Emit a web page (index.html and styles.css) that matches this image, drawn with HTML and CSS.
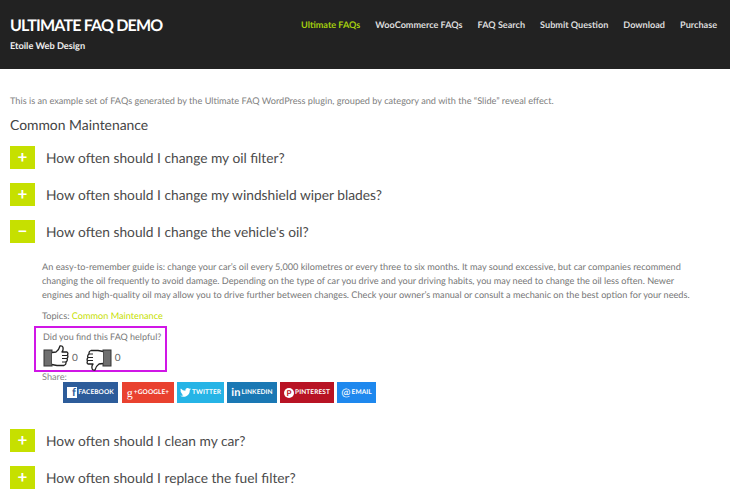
FILE: index.html
```html
<!DOCTYPE html>
<html lang="en">
<head>
<meta charset="utf-8">
<title>Ultimate FAQ Demo</title>
<link rel="stylesheet" href="styles.css">
</head>
<body>
<header class="site-header">
  <div class="brand">
    <h1 class="site-title">ULTIMATE FAQ DEMO</h1>
    <p class="site-sub">Etoile Web Design</p>
  </div>
  <nav class="nav">
    <a class="nav-link current" href="#">Ultimate FAQs</a>
    <a class="nav-link" href="#">WooCommerce FAQs</a>
    <a class="nav-link" href="#">FAQ Search</a>
    <a class="nav-link" href="#">Submit Question</a>
    <a class="nav-link" href="#">Download</a>
    <a class="nav-link" href="#">Purchase</a>
  </nav>
</header>
<main class="content">
  <p class="intro">This is an example set of FAQs generated by the Ultimate FAQ WordPress plugin, grouped by category and with the “Slide” reveal effect.</p>
  <h2 class="category">Common Maintenance</h2>
  <div class="faq"><span class="tile">+</span><h3 class="question">How often should I change my oil filter?</h3></div>
  <div class="faq"><span class="tile">+</span><h3 class="question">How often should I change my windshield wiper blades?</h3></div>
  <div class="faq"><span class="tile">−</span><h3 class="question">How often should I change the vehicle's oil?</h3></div>
  <div class="answer">
    <p class="answer-text">An easy-to-remember guide is: change your car’s oil every 5,000 kilometres or every three to six months. It may sound excessive, but car companies recommend changing the oil frequently to avoid damage. Depending on the type of car you drive and your driving habits, you may need to change the oil less often. Newer engines and high-quality oil may allow you to drive further between changes. Check your owner’s manual or consult a mechanic on the best option for your needs.</p>
    <p class="topics">Topics: <a href="#" class="topic-link">Common Maintenance</a></p>
    <div class="helpful">
      <p class="helpful-q">Did you find this FAQ helpful?</p>
      <div class="votes">
        <svg class="thumb" width="26" height="26" viewBox="0 0 26 26" aria-hidden="true"><rect x="1" y="5" width="8" height="16" fill="#6f6f6f" stroke="#333" stroke-width="1"/><path d="M9 7.500 L13 7 Q16 5 17 1 Q20 .5 20 3 Q20.500 5 19 7 L24 7 Q25.500 8 24.500 10 Q25.500 12 24 13.500 Q25 15.500 23 17 Q23.500 19.500 21 20.500 L14 20.500 Q11 20 9 19.500" fill="#fff" stroke="#222" stroke-width="1.300" stroke-linejoin="round"/><path d="M19 10.500 H24 M19 13.500 H24 M19 17 H23" fill="none" stroke="#222" stroke-width="1"/></svg>
        <span class="count">0</span>
        <svg class="thumb down" width="26" height="26" viewBox="0 0 26 26" aria-hidden="true"><rect x="1" y="5" width="8" height="16" fill="#6f6f6f" stroke="#333" stroke-width="1"/><path d="M9 7.500 L13 7 Q16 5 17 1 Q20 .5 20 3 Q20.500 5 19 7 L24 7 Q25.500 8 24.500 10 Q25.500 12 24 13.500 Q25 15.500 23 17 Q23.500 19.500 21 20.500 L14 20.500 Q11 20 9 19.500" fill="#fff" stroke="#222" stroke-width="1.300" stroke-linejoin="round"/><path d="M19 10.500 H24 M19 13.500 H24 M19 17 H23" fill="none" stroke="#222" stroke-width="1"/></svg>
        <span class="count">0</span>
      </div>
    </div>
    <p class="share-label">Share:</p>
    <div class="share">
      <a href="#" class="btn fb"><span class="glyph fb-g">f</span>FACEBOOK</a>
      <a href="#" class="btn gp"><span class="glyph gp-g">g</span>+GOOGLE+</a>
      <a href="#" class="btn tw"><svg class="ico" width="11" height="9" viewBox="0 0 24 20" aria-hidden="true"><path fill="#fff" d="M24 2.400a9.800 9.800 0 0 1-2.800.8 4.900 4.900 0 0 0 2.200-2.700 9.800 9.800 0 0 1-3.100 1.200A4.900 4.900 0 0 0 11.900 6.100 14 14 0 0 1 1.700.9a4.900 4.900 0 0 0 1.500 6.600 4.900 4.900 0 0 1-2.200-.6c0 2.400 1.700 4.400 3.900 4.900a4.900 4.900 0 0 1-2.200.1 4.900 4.900 0 0 0 4.600 3.400A9.900 9.900 0 0 1 0 17.300 14 14 0 0 0 21.500 5c1-.7 1.900-1.600 2.500-2.600z"/></svg>TWITTER</a>
      <a href="#" class="btn li"><span class="glyph li-g">in</span>LINKEDIN</a>
      <a href="#" class="btn pi"><span class="pin">P</span>PINTEREST</a>
      <a href="#" class="btn em"><span class="glyph em-g">@</span>EMAIL</a>
    </div>
  </div>
  <div class="faq"><span class="tile">+</span><h3 class="question">How often should I clean my car?</h3></div>
  <div class="faq"><span class="tile">+</span><h3 class="question">How often should I replace the fuel filter?</h3></div>
</main>
</body>
</html>
```
FILE: styles.css
```css
* { box-sizing: border-box; }
html, body { margin: 0; padding: 0; }
body {
  width: 730px;
  height: 502px;
  overflow: hidden;
  background: #fff;
  font-family: Lato, "Open Sans", sans-serif;
  color: #777;
  text-rendering: geometricPrecision;
}
p, h1, h2, h3 { margin: 0; }
a { text-decoration: none; }

.site-header {
  height: 69px;
  background: #222;
  display: flex;
  justify-content: space-between;
  padding: 16px 0 0 10px;
}
.site-title { font-size: 16px; line-height: 19px; font-weight: 700; letter-spacing: -.8px; color: #fff; }
.site-sub { font-size: 9.200px; line-height: 13px; margin-top: 4px; font-weight: 700; color: #eee; }
.nav { display: flex; gap: 15px; padding: 2px 13px 0 0; align-items: flex-start; }
.nav-link { font-size: 9.100px; line-height: 14px; font-weight: 700; color: #ddd; }
.nav-link.current { color: #a4cf0e; }

.content { padding: 25px 0 0 10px; }
.intro { font-size: 9.170px; line-height: 13px; color: #808080; }
.category { font-size: 13.900px; line-height: 18px; font-weight: 400; color: #444; margin-top: 9px; }

.faq { display: flex; align-items: center; gap: 11px; height: 23px; margin-bottom: 14px; }
.category + .faq { margin-top: 12px; }
.tile {
  width: 25px; height: 23px;
  background: #c6e000;
  color: #fff;
  font-size: 17px;
  line-height: 22px;
  font-weight: 700;
  text-align: center;
}
.question { font-size: 13.750px; line-height: 20px; font-weight: 400; color: #4a4a4a; }

.answer { padding: 0 0 0 32px; margin-top: 17px; }
.answer-text { width: 650px; font-size: 9.170px; line-height: 14px; color: #777; }
.topics { font-size: 9.170px; line-height: 13px; margin-top: 7px; color: #777; }
.topic-link { color: #c6e000; }
.helpful {
  width: 133px; height: 46px;
  margin: 4px 0 0 -8px;
  padding: 2px 0 0 7px;
  border: 2px solid #d016e6;
}
.helpful-q { font-size: 9px; line-height: 13px; color: #777; white-space: nowrap; }
.votes { display: flex; align-items: center; margin-top: 2px; }
.thumb.down { transform: scale(-1, -1); margin-left: 8px; }
.count { font-size: 10px; margin-left: 3px; color: #666; }
.share-label { font-size: 9.170px; line-height: 12px; margin-top: -1px; color: #888; }
.share { display: flex; gap: 3px; margin: -1px 0 26px 21px; }
.btn {
  display: flex; align-items: center; justify-content: center; gap: 1px;
  height: 21px;
  font-size: 6.500px;
  font-weight: 700;
  letter-spacing: .1px;
  color: #fff;
}
.glyph { font-weight: 700; line-height: 12px; }
.fb { width: 55px; background: #2d5c9a; }
.gp { width: 52px; margin-left: 1px; background: #e9412f; }
.tw { width: 47px; background: #26b4e6; }
.li { width: 50px; background: #1a78b4; }
.pi { width: 54px; background: #b81324; }
.em { width: 39px; background: #1e88ee; }
.fb-g { background: #fff; color: #2d5c9a; width: 10px; height: 11px; font-size: 11px; text-align: right; padding-right: 1px; line-height: 12px; }
.gp-g { font-family: "Liberation Serif", serif; font-size: 12px; font-weight: 400; }
.li-g { font-size: 11px; }
.em-g { font-size: 11px; font-weight: 400; }
.pin { width: 10px; height: 10px; border-radius: 50%; background: #fff; color: #b81324; font-size: 8px; line-height: 10px; text-align: center; }
```
